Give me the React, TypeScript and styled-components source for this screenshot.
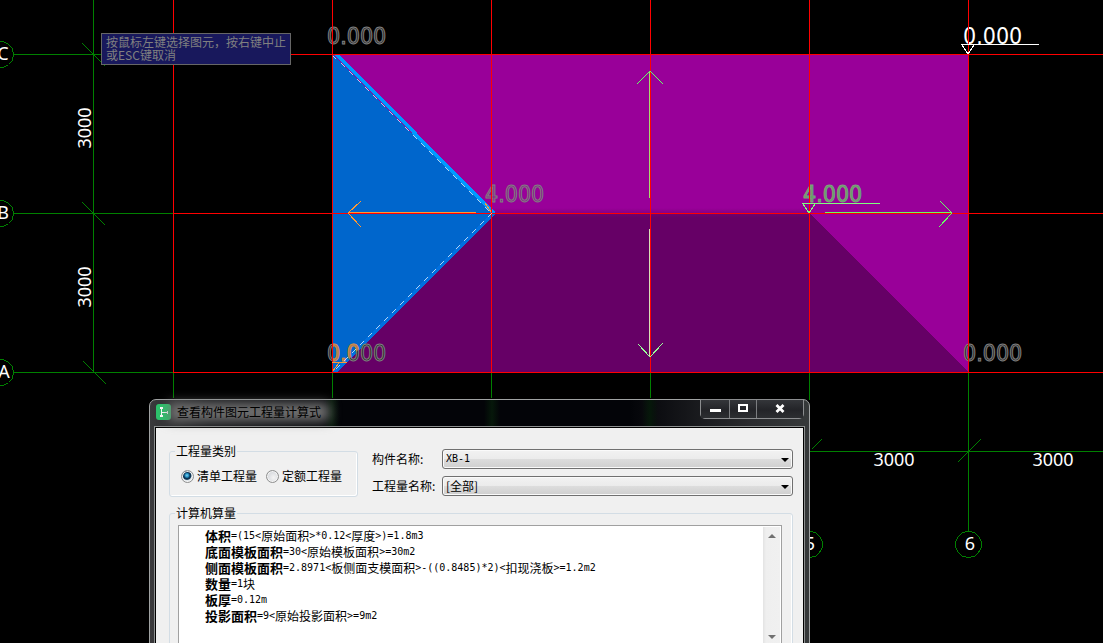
import React from "react";
import styled, { createGlobalStyle, css } from "styled-components";

const GlobalStyle = createGlobalStyle`
  *, *::before, *::after { box-sizing: border-box; }
  html, body, #root { height: 100%; }
  body { margin: 0; background: #000; overflow: hidden; }
`;

const UI_FONT = `"Noto Sans CJK SC", sans-serif`;

const Desktop = styled.main`
  position: relative;
  min-height: 100vh;
  overflow: hidden;
  background: #000;
  font: 12px/16px ${UI_FONT};
  color: #000;
`;

/* ---------- drawing canvas ---------- */

const Canvas = styled.svg`
  position: absolute;
  inset: 0;
  width: 100%;
  height: 100%;
  shape-rendering: crispEdges;
`;

const AxisText = styled.text`
  font: 18px "Noto Sans", sans-serif;
  fill: #fff;
  text-anchor: middle;
`;

const Elevation = styled.text`
  font: 23px "DejaVu Sans Condensed", "DejaVu Sans", sans-serif;
  stroke-width: 1px;
`;

const bubblePoints = (cx: number, cy: number, start: number) =>
  Array.from({ length: 14 }, (_, i) => {
    const a = start + (i * Math.PI) / 7;
    return `${Math.round(cx + 13 * Math.cos(a)) + 0.5},${Math.round(cy + 13 * Math.sin(a)) + 0.5}`;
  }).join(" ");

const Bubble = ({ x, y, side, label, tx }: { x: number; y: number; side?: boolean; label: string; tx: number }) => (
  <g>
    <polygon points={bubblePoints(x, y, side ? 0 : Math.PI / 2)} fill="#000" stroke="#008000" />
    <AxisText x={tx} y={y + 6}>{label}</AxisText>
  </g>
);

const Drawing = () => (
  <Canvas aria-label="roof plan">
    <defs>
      <clipPath id="leftSlope">
        <polygon points="332,54 495,213 336,372 332,372" />
      </clipPath>
      <linearGradient id="ridgeUp" x1="0" y1="0" x2="0" y2="1">
        <stop offset="0" stopColor="#990099" />
        <stop offset="1" stopColor="#860086" />
      </linearGradient>
      <linearGradient id="ridgeDown" x1="0" y1="0" x2="0" y2="1">
        <stop offset="0" stopColor="#720072" />
        <stop offset="1" stopColor="#660066" />
      </linearGradient>
    </defs>

    <polygon points="332,54 968,54 968,372 332,372" fill="#990099" />
    <polygon points="492,213 809,213 968,372 333,372" fill="#660066" />
    <rect x="492" y="208" width="317" height="5" fill="url(#ridgeUp)" />
    <rect x="492" y="213" width="317" height="5" fill="url(#ridgeDown)" />
    <polygon points="332,54 491,213 332,372" fill="#0066cc" />
    <polygon points="334,54 339,54 496,213 491,213" fill="#0099ff" />
    <polygon points="491,213 496,213 338,372 332,372" fill="#0070e0" />

    <g stroke="#008000">
      <path d="M93.5 0V372M13 54.5H173M13 213.5H173M13 372.5H173M810 451.5H4000" />
      <path d="M173.5 372V398M332.5 372V398M491.5 372V398M650.5 372V398M809.5 372V400M968.5 372V531" />
      <path d="M82.5 43.5L105.5 66.5M82.5 202.5L105.5 225.5M83.5 361.5L106.5 384.5M957.5 462.5L980.5 439.5M811.5 449.5L821.5 439.5" />
    </g>

    <g fill="#222" stroke="#808080">
      <Elevation x="327" y="44">0.000</Elevation>
      <Elevation x="963" y="361">0.000</Elevation>
      <Elevation x="327" y="361">0.000</Elevation>
      <Elevation x="485" y="202" fill="#8c1a8c">4.000</Elevation>
    </g>
    <Elevation x="327" y="361" fill="#a07850" stroke="#d08c50" clipPath="url(#leftSlope)">0.000</Elevation>
    <Elevation x="803" y="202" fill="#5f9f5f" stroke="#809f80">4.000</Elevation>
    <Elevation x="963" y="44" fill="#fff" stroke="none">0.000</Elevation>

    <g stroke="#f00">
      <path d="M173 54.5H4000M173 213.5H4000M173 372.5H4000" />
      <path d="M173.5 0V372M332.5 0V372M491.5 0V372M650.5 0V372M809.5 0V372M968.5 0V372" />
    </g>

    <path d="M333.5 55.5L491.5 213.5M491.5 213.5L333.5 371.5" stroke="#fff" strokeWidth="0.7" fill="none" strokeDasharray="5.6 5.7" />

    <g fill="none">
      <path d="M348 212.5H476M361 201L348 213L361 227" stroke="#ff9933" />
      <path d="M825 212.5H952M940 201L952 213L939 227" stroke="#66ff66" />
      <path d="M649.5 71V198" stroke="#a8d870" />
      <path d="M637 84L650 71L663 84" stroke="#66ff66" />
      <path d="M649.5 229V356" stroke="#d8e0b8" />
      <path d="M638 344L650 357L663 343" stroke="#99ff99" />
      <path d="M961 44.5H1039M962 45L968 54L974 45" stroke="#fff" />
      <path d="M802 203.5H880M803 204L809 213L815 204" stroke="#80ff80" />
      <path d="M332 362.5H347M333 371L339 363M485 203L491 212" stroke="#ff9933" />
    </g>

    <AxisText transform="translate(91 128) rotate(-90)">3000</AxisText>
    <AxisText transform="translate(91 287) rotate(-90)">3000</AxisText>
    <AxisText x="894" y="466">3000</AxisText>
    <AxisText x="1053" y="466">3000</AxisText>

    <Bubble x={0} y={54} side label="C" tx={3} />
    <Bubble x={0} y={213} side label="B" tx={3} />
    <Bubble x={0} y={372} side label="A" tx={4} />
    <Bubble x={809} y={544} label="5" tx={810} />
    <Bubble x={968} y={544} label="6" tx={970} />
  </Canvas>
);

const Hint = styled.div`
  position: absolute;
  left: 101px;
  top: 33px;
  width: 190px;
  padding: 1px 4px 3px;
  border: 1px solid #666;
  background: #18185c;
  color: #808080;
  line-height: 13px;
`;

/* ---------- dialog ---------- */

const Dialog = styled.section`
  position: absolute;
  left: 149px;
  top: 399px;
  width: 661px;
  max-width: 100%;
  padding: 0 4px 4px;
  border: 1px solid #a0a3a3;
  border-radius: 7px 7px 0 0;
  background: linear-gradient(90deg, #3a3a3c 0, #18191c 60px, #030408 190px, #030408 480px, #2a2b2e 600px, #36393a 100%);
`;

const TitleBar = styled.header`
  position: relative;
  display: flex;
  align-items: flex-start;
  height: 26px;
  padding: 4px 1px 0 2px;
`;

const GlassStreak = styled.i<{ $x: number }>`
  position: absolute;
  top: 0;
  bottom: 0;
  left: ${(p) => p.$x}px;
  width: 16px;
  background: linear-gradient(90deg, transparent, #06180a, transparent);
`;

const Title = styled.h1`
  position: relative;
  margin: 0 0 0 6px;
  font: 12px/16px ${UI_FONT};
  z-index: 0;

  &::before {
    content: "";
    position: absolute;
    inset: -1px -8px;
    z-index: -1;
    background: #747474;
    filter: blur(6px);
  }
`;

const WindowButtons = styled.div`
  display: flex;
  margin: -5px 0 0 auto;
  height: 20px;
  border: 1px solid #8b8d8f;
  border-radius: 0 0 5px 5px;
`;

const WindowButton = styled.button<{ $w: number }>`
  display: flex;
  align-items: center;
  justify-content: center;
  width: ${(p) => p.$w}px;
  padding: 0;
  border: 0;
  background: linear-gradient(#34363a, #232428 55%, #2c2e31);

  & + & { border-left: 1px solid #7b7d80; }
`;

const Client = styled.div`
  padding: 16px 10px 12px 13px;
  outline: 1px solid #000;
  box-shadow: 0 0 0 2px #8c8f8f;
  margin: 2px;
  background: #f0f0f0;
`;

const TopRow = styled.div`
  display: flex;
  align-items: flex-start;
  gap: 14px;
  margin-bottom: 9px;
`;

const Group = styled.fieldset<{ $w?: number }>`
  ${(p) => p.$w && css`width: ${p.$w}px; flex: none;`}
  min-width: 0;
  margin: 0;
  padding: 0;
  border: 1px solid #d3dde5;
  border-radius: 3px;
  box-shadow: inset -1px -1px 0 #fff;
`;

const Legend = styled.legend`
  margin-left: 5px;
  padding: 0 1px;
  line-height: 14px;
  background: #f0f0f0;
`;

const Radios = styled.div`
  display: flex;
  gap: 9px;
  padding: 10px 0 12px 11px;
`;

const RadioLabel = styled.label`
  display: flex;
  align-items: center;
  gap: 3px;
`;

const Radio = styled.input`
  appearance: none;
  width: 13px;
  height: 13px;
  margin: 0;
  border: 1px solid #8e8f8f;
  border-radius: 50%;
  background: radial-gradient(circle at 60% 60%, #f4f4f4, #c8ccd2);
  box-shadow: inset 0 0 0 1px #f4f4f4;

  &:checked {
    background: radial-gradient(circle at 45% 40%, #7fd4f4 0, #1c86b8 2px, #0c3050 3px, #123a58 4px, #dfe6ea 5px);
  }
`;

const Fields = styled.div`
  display: grid;
  grid-template-columns: 70px 1fr;
  row-gap: 7px;
  flex: 1;
  padding-top: 5px;
  line-height: 20px;
`;

const SelectBox = styled.div`
  position: relative;
  height: 20px;

  &::after {
    content: "";
    position: absolute;
    right: 4px;
    top: 9px;
    border: 4px solid transparent;
    border-top-color: #000;
    border-bottom: 0;
    pointer-events: none;
  }
`;

const Select = styled.select<{ $mono?: boolean }>`
  display: block;
  appearance: none;
  width: 100%;
  height: 20px;
  padding: 0 3px 1px;
  border: 1px solid #707070;
  border-radius: 3px;
  background: linear-gradient(#f2f2f2, #ebebeb 50%, #dddddd 50%, #cfcfcf);
  box-shadow: inset 0 0 0 1px #fafafa;
  color: #000;
  font: ${(p) => (p.$mono ? `10px "DejaVu Sans Mono", monospace` : `12px ${UI_FONT}`)};
`;

const ResultBox = styled.div`
  display: flex;
  min-height: 122px;
  margin: 5px 10px 9px 8px;
  border: 1px solid #a0a0a0;
  background: #fff;
`;

const Formulas = styled.div`
  flex: 1;
  padding: 2px 0 0 26px;
`;

const Formula = styled.p`
  display: flex;
  margin: 0;
  height: 16px;
  white-space: pre;
`;

const Quantity = styled.b`
  font-size: 13px;
  font-weight: 700;
`;

const Half = styled.span`
  font: 10px/16px "DejaVu Sans Mono", monospace;
`;

const ScrollTrack = styled.div`
  display: flex;
  flex-direction: column;
  justify-content: space-between;
  width: 17px;
  margin: 1px 1px 0 0;
  background: linear-gradient(90deg, #e3e3e3, #efefef 3px, #f0f0f0);
`;

const ScrollButton = styled.button<{ $down?: boolean }>`
  display: flex;
  align-items: center;
  justify-content: center;
  height: 18px;
  padding: 0;
  border: 0;
  background: none;

  &::before {
    content: "";
    border: 4px solid transparent;
    ${(p) => (p.$down ? "border-top-color: #707070; border-bottom: 0;" : "border-bottom-color: #707070; border-top: 0;")}
  }
`;

const results: [string, string][] = [
  ["体积", "=(15<原始面积>*0.12<厚度>)=1.8m3"],
  ["底面模板面积", "=30<原始模板面积>=30m2"],
  ["侧面模板面积", "=2.8971<板侧面支模面积>-((0.8485)*2)<扣现浇板>=1.2m2"],
  ["数量", "=1块"],
  ["板厚", "=0.12m"],
  ["投影面积", "=9<原始投影面积>=9m2"],
];

const runs = (text: string) =>
  (text.match(/[\x20-\x7e]+|[^\x20-\x7e]+/g) ?? []).map((run, i) =>
    /^[\x20-\x7e]/.test(run) ? <Half key={i}>{run}</Half> : <span key={i}>{run}</span>
  );

const AppIcon = () => (
  <svg width="15" height="16" viewBox="0 0 15 16" aria-hidden="true">
    <rect width="15" height="16" rx="3" fill="#2cc36b" />
    <path d="M5.500 4V13M5 8.500H12" stroke="#fff" fill="none" />
    <path d="M4 3h3v2h-3zM4 11h3v2h-3zM11 7h1v3h-1z" fill="#fff" />
  </svg>
);

export default function App() {
  return (
    <Desktop>
      <GlobalStyle />
      <Drawing />
      <Hint>按鼠标左键选择图元，按右键中止或ESC键取消</Hint>

      <Dialog role="dialog" aria-labelledby="dialog-title">
        <TitleBar>
          {[170, 330, 488].map((x) => (
            <GlassStreak key={x} $x={x} />
          ))}
          <AppIcon />
          <Title id="dialog-title">查看构件图元工程量计算式</Title>
          <WindowButtons>
            <WindowButton $w={28} aria-label="最小化">
              <svg width="12" height="12"><rect x="1" y="6" width="11" height="3" fill="#fff" /></svg>
            </WindowButton>
            <WindowButton $w={27} aria-label="最大化">
              <svg width="12" height="12"><rect x="2" y="2" width="8" height="6" fill="none" stroke="#fff" strokeWidth="2" /></svg>
            </WindowButton>
            <WindowButton $w={47} aria-label="关闭">
              <svg width="12" height="12"><path d="M2.500 2L9.500 9M9.500 2L2.500 9" stroke="#fff" strokeWidth="2.800" /></svg>
            </WindowButton>
          </WindowButtons>
        </TitleBar>

        <Client>
          <TopRow>
            <Group $w={189}>
              <Legend>工程量类别</Legend>
              <Radios>
                <RadioLabel>
                  <Radio type="radio" name="kind" defaultChecked />
                  清单工程量
                </RadioLabel>
                <RadioLabel>
                  <Radio type="radio" name="kind" />
                  定额工程量
                </RadioLabel>
              </Radios>
            </Group>
            <Fields>
              <label htmlFor="component">构件名称:</label>
              <SelectBox>
                <Select id="component" $mono defaultValue="XB-1">
                  <option>XB-1</option>
                </Select>
              </SelectBox>
              <label htmlFor="quantity">工程量名称:</label>
              <SelectBox>
                <Select id="quantity" defaultValue="[全部]">
                  <option>[全部]</option>
                </Select>
              </SelectBox>
            </Fields>
          </TopRow>

          <Group>
            <Legend>计算机算量</Legend>
            <ResultBox>
              <Formulas>
                {results.map(([name, formula]) => (
                  <Formula key={name}>
                    <Quantity>{name}</Quantity>
                    {runs(formula)}
                  </Formula>
                ))}
              </Formulas>
              <ScrollTrack>
                <ScrollButton aria-label="向上滚动" />
                <ScrollButton $down aria-label="向下滚动" />
              </ScrollTrack>
            </ResultBox>
          </Group>
        </Client>
      </Dialog>
    </Desktop>
  );
}
